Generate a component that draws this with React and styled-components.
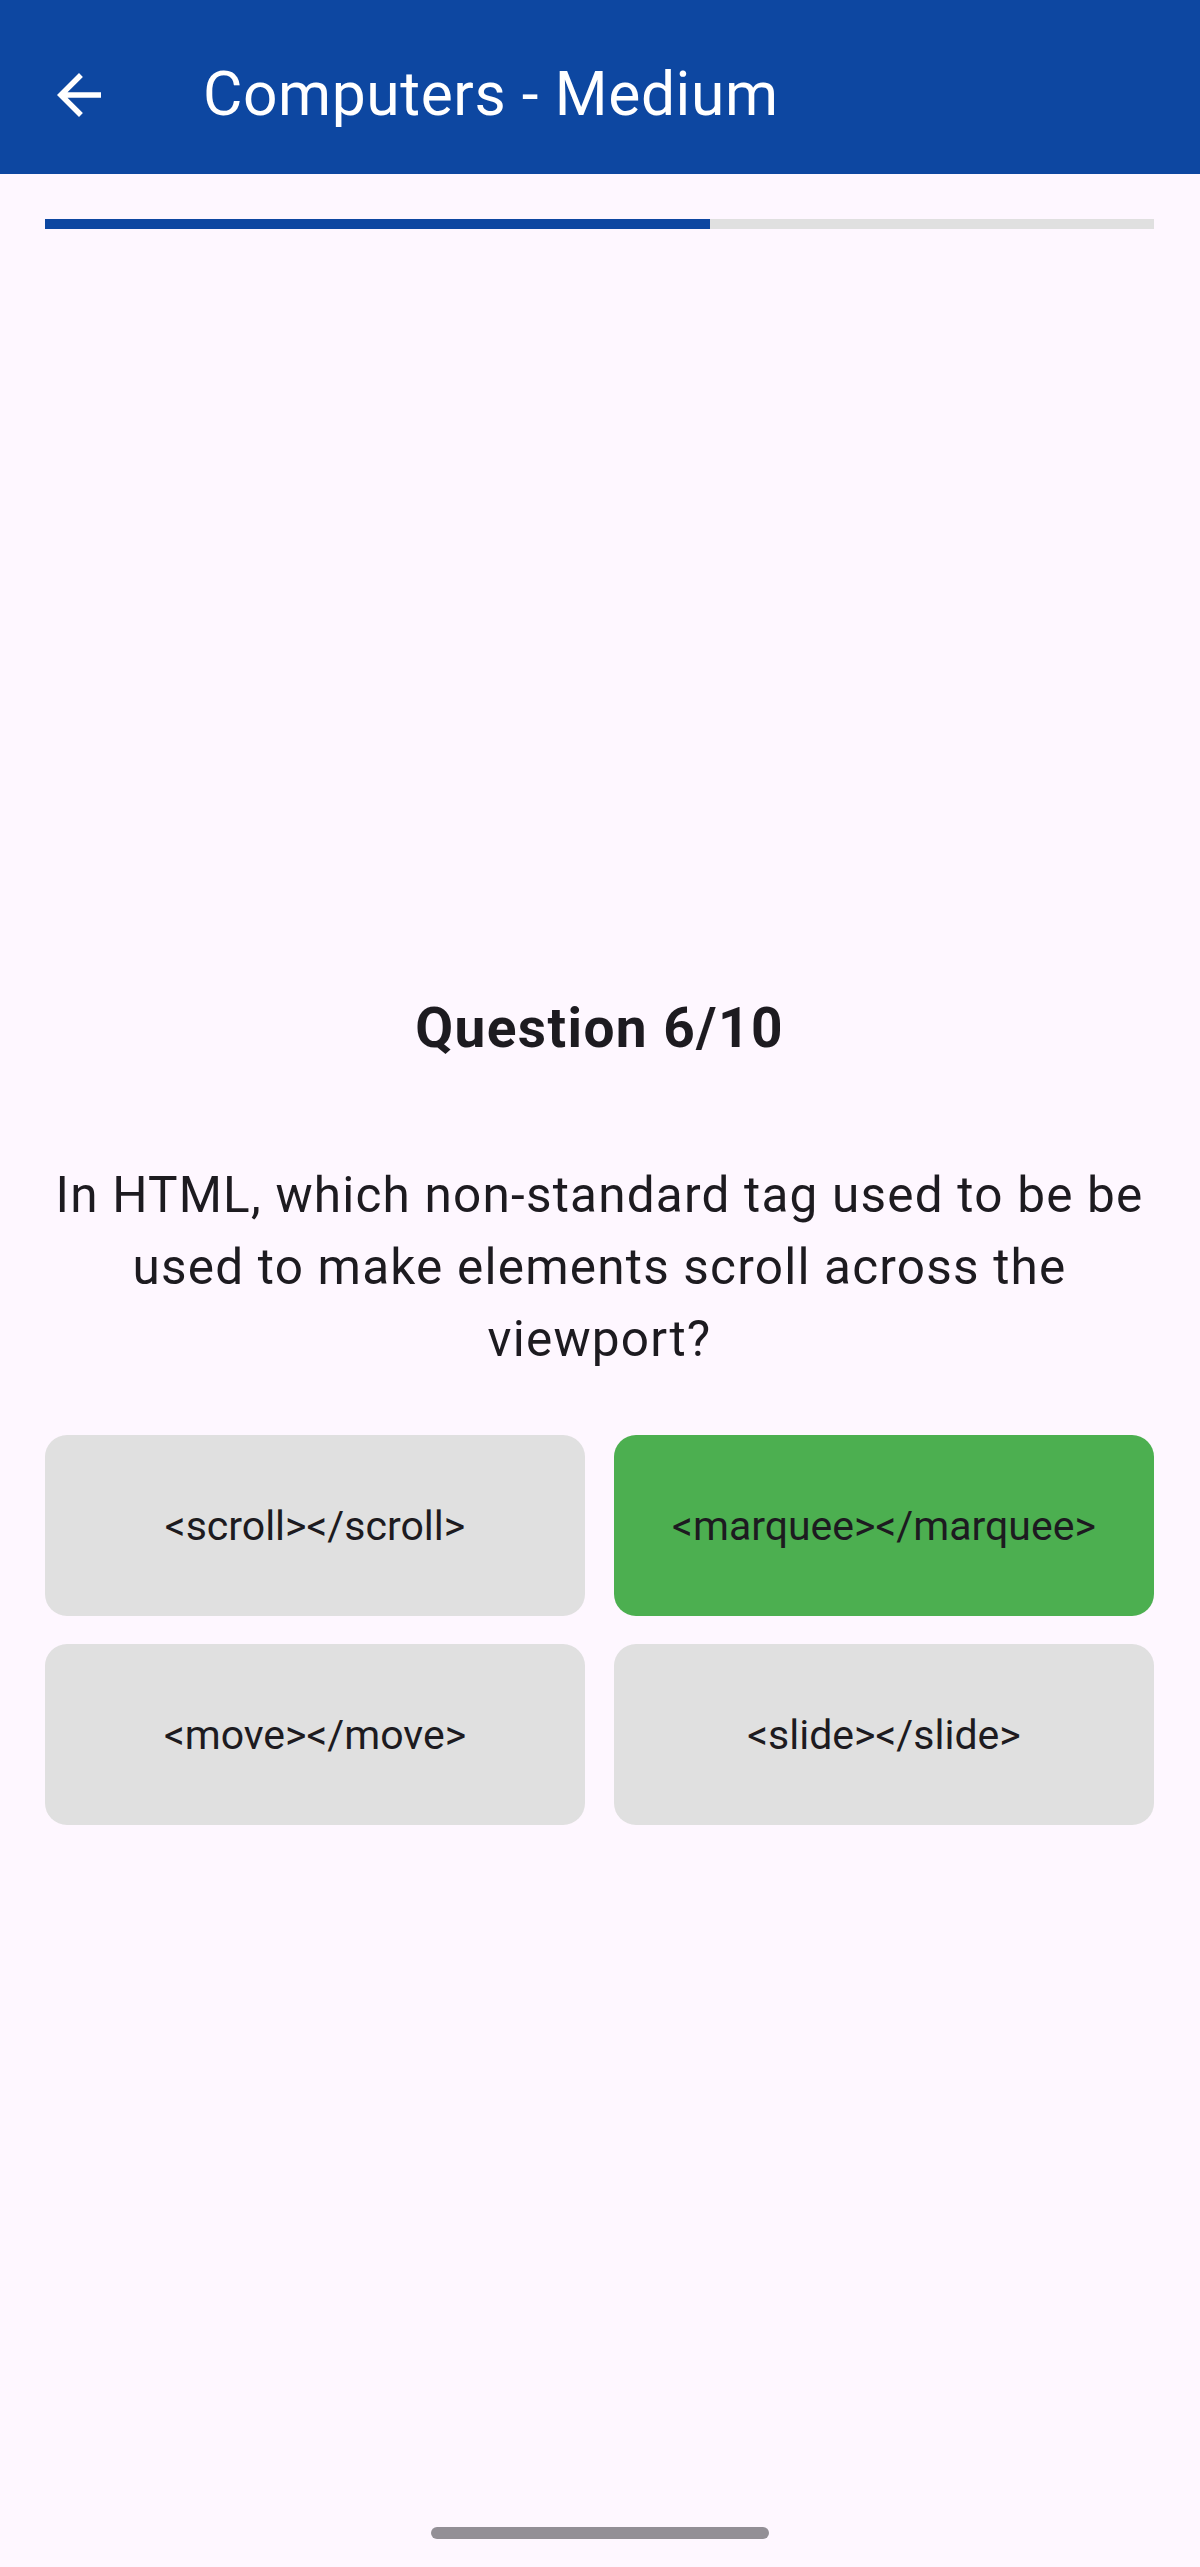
import React from "react";
import styled, { createGlobalStyle } from "styled-components";

const GlobalStyle = createGlobalStyle`
  html, body {
    margin: 0;
    padding: 0;
    background: #fef7ff;
  }
  * {
    box-sizing: border-box;
  }
`;

const Page = styled.div`
  display: flex;
  flex-direction: column;
  min-height: 2567px;
  background: #fef7ff;
  font-family: Roboto, "Noto Sans", sans-serif;
  color: #1d1b20;
`;

const AppBar = styled.header`
  display: flex;
  align-items: center;
  height: 174px;
  padding: 16px 0 0 46px;
  background: #0d47a1;
  color: #fff;
`;

const BackButton = styled.button`
  display: flex;
  width: 66px;
  height: 66px;
  padding: 0;
  border: none;
  background: none;
  color: inherit;
  cursor: pointer;
`;

const Title = styled.h1`
  margin: 0 0 0 91px;
  font-size: 60.5px;
  font-weight: 400;
  letter-spacing: 0.6px;
  line-height: 1.2;
`;

const Body = styled.main`
  display: flex;
  flex-direction: column;
  padding: 45px 46px 0 45px;
`;

const Track = styled.div`
  height: 10px;
  background: #e0e0e0;
`;

const Fill = styled.div`
  height: 100%;
  background: #0d47a1;
`;

const Heading = styled.h2`
  margin: 766px 0 0;
  font-size: 55px;
  font-weight: 700;
  letter-spacing: 1.4px;
  line-height: 66px;
  text-align: center;
`;

const QuestionText = styled.p`
  margin: 98px 0 0;
  font-size: 49.5px;
  letter-spacing: 1.2px;
  line-height: 72px;
  text-align: center;
`;

const Answers = styled.div`
  display: grid;
  grid-template-columns: 1fr 1fr;
  column-gap: 29px;
  row-gap: 28px;
  margin-top: 60px;
`;

const Answer = styled.button`
  display: flex;
  align-items: center;
  justify-content: center;
  height: 181px;
  border: none;
  border-radius: 22px;
  background: ${props => (props.correct ? "#4caf50" : "#e0e0e0")};
  color: #1d1b20;
  font-family: inherit;
  font-size: 41px;
  line-height: 48px;
  cursor: pointer;
`;

const HomeIndicator = styled.div`
  align-self: center;
  width: 338px;
  height: 12px;
  margin: auto 0 28px;
  border-radius: 6px;
  background: #938f96;
`;

const answers = [
  { text: "<scroll></scroll>" },
  { text: "<marquee></marquee>", correct: true },
  { text: "<move></move>" },
  { text: "<slide></slide>" }
];

const current = 6;
const total = 10;

const ArrowBack = () => (
  <svg width="66" height="66" viewBox="0 0 24 24" fill="currentColor">
    <path d="M20 11H7.83l5.59-5.59L12 4l-8 8 8 8 1.41-1.41L7.83 13H20v-2z" />
  </svg>
);

const App = () => (
  <>
    <GlobalStyle />
    <Page>
      <AppBar>
        <BackButton aria-label="Back">
          <ArrowBack />
        </BackButton>
        <Title>Computers - Medium</Title>
      </AppBar>
      <Body>
        <Track>
          <Fill style={{ width: `${(current / total) * 100}%` }} />
        </Track>
        <Heading>
          Question {current}/{total}
        </Heading>
        <QuestionText>
          In HTML, which non-standard tag used to be be used to make elements
          scroll across the viewport?
        </QuestionText>
        <Answers>
          {answers.map(a => (
            <Answer key={a.text} correct={a.correct}>
              {a.text}
            </Answer>
          ))}
        </Answers>
      </Body>
      <HomeIndicator />
    </Page>
  </>
);

export default App;
